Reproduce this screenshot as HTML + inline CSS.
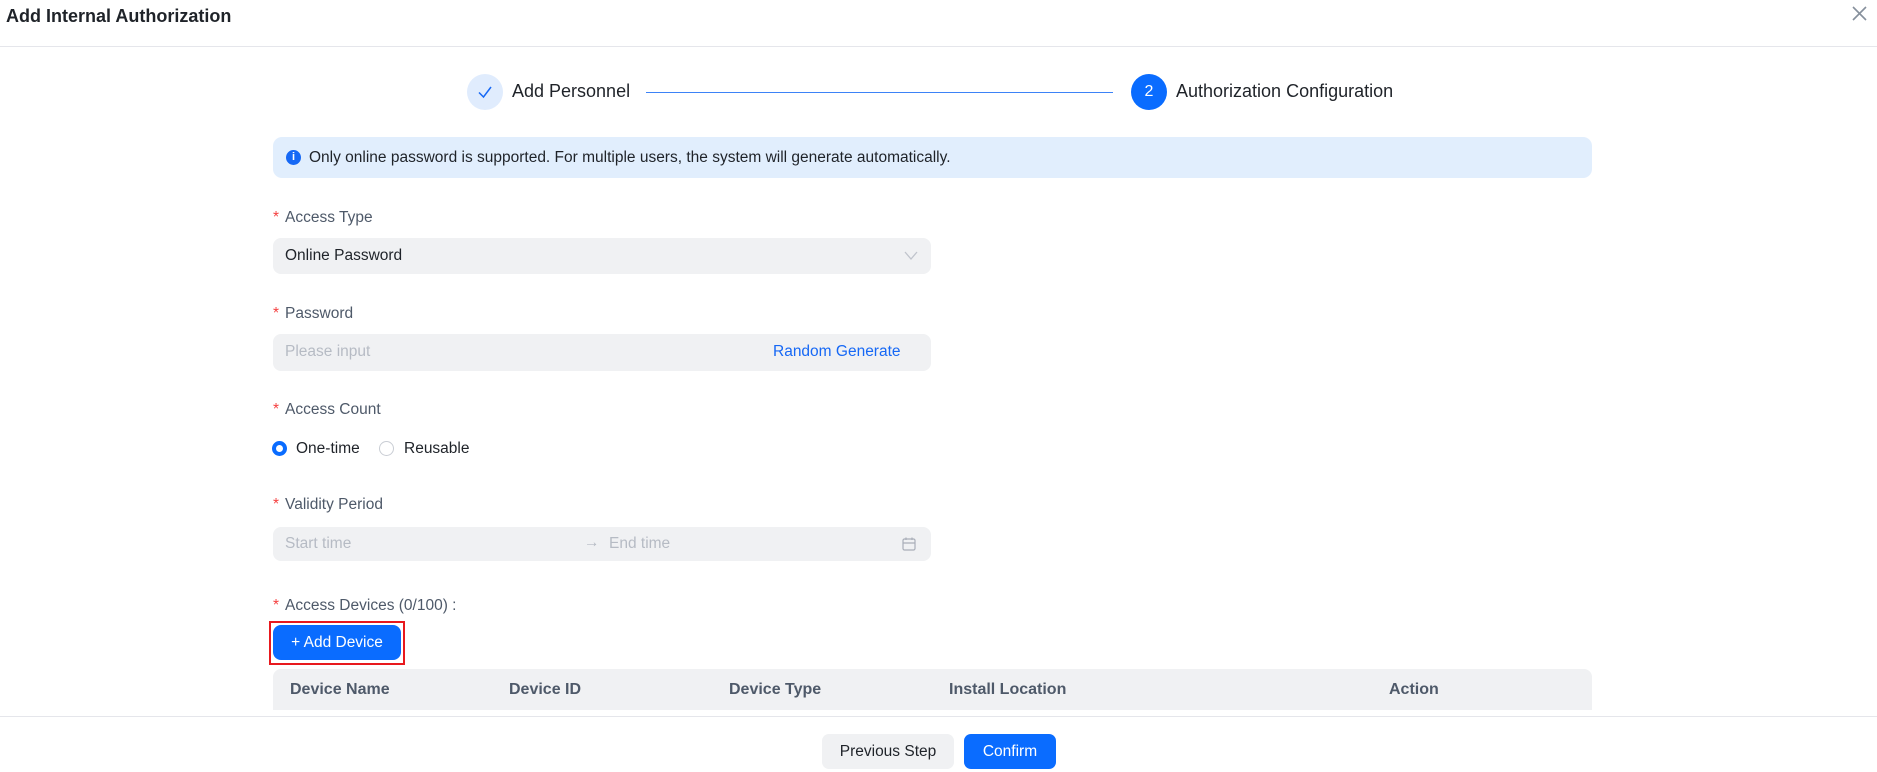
<!DOCTYPE html>
<html><head><meta charset="utf-8"><style>
*{box-sizing:border-box;margin:0;padding:0}
body{width:1877px;height:772px;overflow:hidden;background:#fff;font-family:"Liberation Sans",sans-serif;color:#1f2329;position:relative}
.a{position:absolute}
.lbl{position:absolute;left:273px;font-size:15.5px;color:#4e5969}
.lbl b{color:#f53f3f;font-weight:normal;margin-right:6px}
.inp{position:absolute;left:273px;width:658px;background:#f0f1f3;border-radius:8px;font-size:15.5px}
.th{position:absolute;top:681px;font-size:16px;color:#4e5969;font-weight:bold}
</style></head><body>
<div class="a" style="left:6px;top:6px;font-size:18px;font-weight:bold">Add Internal Authorization</div>
<svg class="a" style="left:1852px;top:6px" width="15" height="15"><path d="M1 1L14 14M14 1L1 14" stroke="#86909c" stroke-width="1.6"/></svg>
<div class="a" style="left:0;top:46px;width:1877px;height:1px;background:#e5e6eb"></div>

<div class="a" style="left:467px;top:74px;width:36px;height:36px;border-radius:50%;background:#e0ecfd"></div>
<svg class="a" style="left:477px;top:84px" width="16" height="16"><path d="M2 8.5L6.5 13L14 3" fill="none" stroke="#1668f5" stroke-width="1.5"/></svg>
<div class="a" style="left:512px;top:81px;font-size:18px;color:#1f2329">Add Personnel</div>
<div class="a" style="left:646px;top:92px;width:467px;height:1px;background:#3d83f7"></div>
<div class="a" style="left:1131px;top:74px;width:36px;height:36px;border-radius:50%;background:#0a6cff;color:#fff;font-size:16px;text-align:center;line-height:36px">2</div>
<div class="a" style="left:1176px;top:81px;font-size:18px;color:#1f2329">Authorization Configuration</div>

<div class="a" style="left:273px;top:137px;width:1319px;height:41px;background:#e1eefd;border-radius:9px"></div>
<div class="a" style="left:286px;top:150px;width:15px;height:15px;border-radius:50%;background:#1668f5;color:#fff;font-size:11px;text-align:center;line-height:15px;font-weight:bold">i</div>
<div class="a" style="left:309px;top:149px;font-size:15.5px;color:#1f2329">Only online password is supported. For multiple users, the system will generate automatically.</div>

<div class="lbl" style="top:209px"><b>*</b>Access Type</div>
<div class="inp" style="top:238px;height:36px"><span class="a" style="left:12px;top:9px;color:#1f2329">Online Password</span>
<svg class="a" style="left:631px;top:13px" width="14" height="10"><path d="M1 1L7 8L13 1" fill="none" stroke="#c0c4cc" stroke-width="1.3"/></svg></div>

<div class="lbl" style="top:305px"><b>*</b>Password</div>
<div class="inp" style="top:334px;height:37px"><span class="a" style="left:12px;top:9px;color:#b6bbc4">Please input</span><span class="a" style="left:500px;top:9px;color:#1668f5">Random Generate</span></div>

<div class="lbl" style="top:401px"><b>*</b>Access Count</div>
<div class="a" style="left:272px;top:441px;width:15px;height:15px;border-radius:50%;border:4.5px solid #0a6cff;background:#fff"></div>
<div class="a" style="left:296px;top:440px;font-size:15.5px">One-time</div>
<div class="a" style="left:379px;top:441px;width:15px;height:15px;border-radius:50%;border:1px solid #c9cdd4"></div>
<div class="a" style="left:404px;top:440px;font-size:15.5px">Reusable</div>

<div class="lbl" style="top:496px"><b>*</b>Validity Period</div>
<div class="inp" style="top:527px;height:34px"><span class="a" style="left:12px;top:8px;color:#b6bbc4">Start time</span><span class="a" style="left:311px;top:7px;color:#b6bbc4">→</span><span class="a" style="left:336px;top:8px;color:#b6bbc4">End time</span>
<svg class="a" style="left:629px;top:10px" width="14" height="14"><rect x="1" y="2" width="12" height="11" rx="1.5" fill="none" stroke="#a9aeb8" stroke-width="1.2"/><path d="M1 6H13M4 0.5V3M10 0.5V3" stroke="#a9aeb8" stroke-width="1.2"/></svg></div>

<div class="lbl" style="top:597px"><b>*</b>Access Devices (0/100) :</div>
<div class="a" style="left:269px;top:621px;width:136px;height:44px;border:2px solid #e8191e"></div>
<div class="a" style="left:273px;top:625px;width:128px;height:35px;background:#0a6cff;border-radius:8px;color:#fff;font-size:15.5px;text-align:center;line-height:35px">+ Add Device</div>

<div class="a" style="left:273px;top:669px;width:1319px;height:41px;background:#f0f1f3;border-radius:8px 8px 0 0"></div>
<div class="th" style="left:290px">Device Name</div>
<div class="th" style="left:509px">Device ID</div>
<div class="th" style="left:729px">Device Type</div>
<div class="th" style="left:949px">Install Location</div>
<div class="th" style="left:1389px">Action</div>

<div class="a" style="left:0;top:716px;width:1877px;height:56px;background:#fff;border-top:1px solid #e5e6eb"></div>
<div class="a" style="left:822px;top:734px;width:132px;height:35px;background:#f0f1f3;border-radius:7px;font-size:15.5px;text-align:center;line-height:35px;color:#1f2329">Previous Step</div>
<div class="a" style="left:964px;top:734px;width:92px;height:35px;background:#0a6cff;border-radius:7px;font-size:15.5px;text-align:center;line-height:35px;color:#fff">Confirm</div>
</body></html>
